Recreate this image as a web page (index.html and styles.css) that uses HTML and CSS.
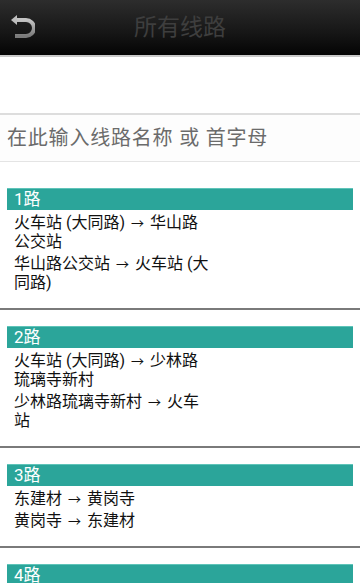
FILE: index.html
```html
<!DOCTYPE html>
<html lang="zh-CN">
<head>
    <meta charset="UTF-8">
    <meta name="viewport" content="width=device-width, initial-scale=1.0">
    <title>所有线路</title>
    <link rel="stylesheet" href="styles.css">
</head>
<body>
    <div class="topbar">
        <button class="back">
            <svg width="26" height="26" viewBox="0 0 26 26">
                <defs>
                    <linearGradient id="backGrad" x1="0" y1="0" x2="0" y2="1">
                        <stop offset="0" stop-color="#c4c4c4"/>
                        <stop offset="1" stop-color="#7a7a7a"/>
                    </linearGradient>
                </defs>
                <path d="M6 7 H17 A8 8 0 0 1 17 23 H6" fill="none" stroke="url(#backGrad)" stroke-width="4"/>
                <path d="M2 7 L8 2 L8 12 Z" fill="#bdbdbd"/>
            </svg>
        </button>
        <div class="title">所有线路</div>
    </div>

    <div class="spacer"></div>

    <div class="search">
        <input type="text" placeholder="在此输入线路名称 或 首字母">
    </div>

    <div class="lines">
        <div class="line">
            <div class="line-name">1路</div>
            <div class="route">火车站 (大同路) <span class="arrow">→</span> 华山路<br>公交站</div>
            <div class="route">华山路公交站 <span class="arrow">→</span> 火车站 (大<br>同路)</div>
        </div>
        <div class="line">
            <div class="line-name">2路</div>
            <div class="route">火车站 (大同路) <span class="arrow">→</span> 少林路<br>琉璃寺新村</div>
            <div class="route">少林路琉璃寺新村 <span class="arrow">→</span> 火车<br>站</div>
        </div>
        <div class="line">
            <div class="line-name">3路</div>
            <div class="route">东建材 <span class="arrow">→</span> 黄岗寺</div>
            <div class="route">黄岗寺 <span class="arrow">→</span> 东建材</div>
        </div>
        <div class="line">
            <div class="line-name">4路</div>
        </div>
    </div>
</body>
</html>
```

FILE: styles.css
```css
* {
    margin: 0;
    padding: 0;
    box-sizing: border-box;
}

body {
    width: 360px;
    height: 583px;
    overflow: hidden;
    background: #fff;
    font-family: Roboto, "Noto Sans CJK SC", sans-serif;
}

.topbar {
    height: 57px;
    display: flex;
    align-items: center;
    background: linear-gradient(to bottom, #2d2d2d, #161616 60%, #040404);
    border-bottom: 2px solid #c9c9c9;
    position: relative;
}

.back {
    width: 26px;
    height: 26px;
    margin: 0 0 3px 9px;
    border: none;
    background: none;
    display: flex;
}

.title {
    position: absolute;
    left: 0;
    right: 0;
    top: 13px;
    text-align: center;
    font-size: 23px;
    line-height: 30px;
    color: #3e3e3e;
    pointer-events: none;
}

.spacer {
    height: 56px;
}

.search {
    border-top: 2px solid #dddddd;
    border-bottom: 1px solid #e4e4e4;
    background: #fdfdfd;
}

.search input {
    width: 100%;
    height: 46px;
    border: none;
    outline: none;
    background: transparent;
    padding: 0 7px;
    font-family: Roboto, "Noto Sans CJK SC", sans-serif;
    font-size: 20px;
    letter-spacing: 0.8px;
    color: #333;
}

.search input::placeholder {
    color: #6b6b6b;
}

.lines {
    margin-top: 10px;
}

.line {
    padding: 16px 7px 16px;
    border-bottom: 2px solid #7a7a7a;
}

.line-name {
    height: 22px;
    line-height: 21px;
    padding-left: 7px;
    background: #2ba59a;
    border-top: 1px solid #5fc4b9;
    color: #fff;
    font-size: 17px;
}

.route {
    margin-top: 3px;
    padding-left: 7px;
    font-size: 16px;
    line-height: 19px;
    color: #111;
}

.arrow {
    font-size: 13px;
    line-height: 0;
    margin: 0 2px;
}
```
